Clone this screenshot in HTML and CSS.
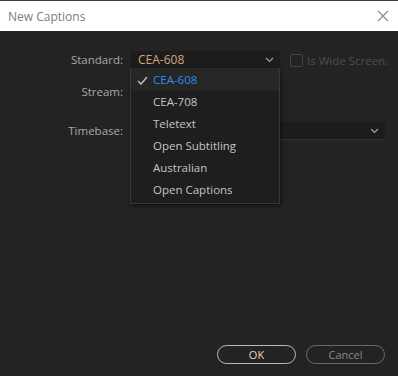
FILE: index.html
```html
<!DOCTYPE html>
<html lang="en">
<head>
    <meta charset="UTF-8">
    <title>New Captions</title>
    <link rel="stylesheet" href="styles.css">
</head>
<body>
    <div class="dialog">
        <div class="titlebar">
            <span class="title">New Captions</span>
            <svg class="close" width="12" height="12" viewBox="0 0 12 12"><path d="M1 1L11 11M11 1L1 11" stroke="#8a8a8a" stroke-width="1.1" fill="none"/></svg>
        </div>
        <div class="content">
            <div class="form">
                <div class="row">
                    <label class="label">Standard:</label>
                    <div class="select-wrap">
                        <div class="select">
                            <span class="value">CEA-608</span>
                            <svg class="chev" width="9" height="6" viewBox="0 0 9 6"><path d="M1 1L4.5 4.5L8 1" stroke="#a0a0a0" stroke-width="1.2" fill="none"/></svg>
                        </div>
                        <ul class="menu">
                            <li class="item selected"><svg class="check" width="11" height="9" viewBox="0 0 11 9"><path d="M1 5L4 8L10 1" stroke="#b8b8b8" stroke-width="1.6" fill="none"/></svg>CEA-608</li>
                            <li class="item">CEA-708</li>
                            <li class="item">Teletext</li>
                            <li class="item">Open Subtitling</li>
                            <li class="item">Australian</li>
                            <li class="item">Open Captions</li>
                        </ul>
                    </div>
                    <div class="checkbox-wrap">
                        <span class="box"></span>
                        <span class="cb-label">Is Wide Screen:</span>
                    </div>
                </div>
                <div class="row">
                    <label class="label">Stream:</label>
                </div>
                <div class="row row-time">
                    <label class="label">Timebase:</label>
                    <div class="select wide">
                        <span class="value"></span>
                        <svg class="chev" width="9" height="6" viewBox="0 0 9 6"><path d="M1 1L4.5 4.5L8 1" stroke="#a0a0a0" stroke-width="1.2" fill="none"/></svg>
                    </div>
                </div>
            </div>
            <div class="buttons">
                <button class="btn ok">OK</button>
                <button class="btn cancel">Cancel</button>
            </div>
        </div>
    </div>
</body>
</html>
```

FILE: styles.css
```css
html, body{
    margin : 0;
    padding : 0;
    width : 100%;
    height : 100%;
}
body{
    font-family: "Open Sans", "Noto Sans", sans-serif;
    font-size : 11px;
    background : #232323;
}
.dialog{
    width : 398px;
    height : 376px;
    display : flex;
    flex-direction: column;
    border-top : 1px solid #3c3c3c;
    box-sizing: border-box;
}
.titlebar{
    height : 30px;
    background : #ffffff;
    display : flex;
    align-items: center;
    justify-content: space-between;
    padding : 0 8px 0 8px;
    flex-shrink: 0;
}
.title{
    color : #7c7c7c;
    font-size : 12px;
}
.close{
    margin-right : 1px;
}
.content{
    flex-grow : 1;
    background : #232323;
    display : flex;
    flex-direction: column;
    justify-content: space-between;
    padding : 20px 13px 12px 0;
}
.row{
    display : flex;
    align-items: flex-start;
}
.label{
    width : 123px;
    text-align: right;
    color : #a9a9a9;
    line-height : 18px;
    font-size : 11.5px;
    flex-shrink: 0;
}
.select-wrap{
    position : relative;
    margin-left : 7px;
}
.select{
    width : 150px;
    height : 18px;
    box-sizing: border-box;
    background : #1c1c1c;
    border-bottom : 1px solid #2f2f2f;
    display : flex;
    align-items: center;
    justify-content: space-between;
    padding : 0 6px 0 8px;
}
.select.wide{
    width : 255px;
    margin-left : 7px;
}
.value{
    color : #d5a57c;
    font-size : 12px;
    line-height : 18px;
}
.menu{
    position : absolute;
    top : 18px;
    left : 0;
    width : 150px;
    box-sizing: border-box;
    margin : 0;
    padding : 0 0 2px 0;
    list-style: none;
    background : #1e1e1e;
    border : 1px solid #383838;
    border-top : none;
    box-shadow: 1px 2px 4px rgba(0,0,0,0.5);
    z-index : 2;
}
.item{
    height : 22px;
    line-height : 22px;
    padding-left : 22px;
    color : #c4c4c4;
    font-size : 11.5px;
    position : relative;
}
.item.selected{
    background : #262626;
    color : #2d8cea;
}
.check{
    position : absolute;
    left : 6px;
    top : 7px;
}
.checkbox-wrap{
    display : flex;
    align-items: center;
    margin-left : 10px;
    height : 16px;
    margin-top : 1px;
    white-space: nowrap;
}
.box{
    width : 11px;
    height : 11px;
    border : 1px solid #454545;
    border-radius: 2px;
    flex-shrink: 0;
}
.cb-label{
    color : #4e4e4e;
    margin-left : 4px;
    font-size : 11.5px;
}
.row + .row{
    margin-top : 14px;
}
.row-time{
    margin-top : 21px !important;
}
.buttons{
    display : flex;
    justify-content: flex-end;
    gap : 10px;
}
.btn{
    width : 79px;
    height : 19px;
    border-radius: 10px;
    background : transparent;
    font-family: "Open Sans", "Noto Sans", sans-serif;
    font-size : 11px;
    padding : 0;
    line-height : 15px;
}
.ok{
    border : 1px solid #b9b9b9;
    color : #e6d3bf;
}
.cancel{
    border : 1px solid #6a6a6a;
    color : #8a8a8a;
}
```
